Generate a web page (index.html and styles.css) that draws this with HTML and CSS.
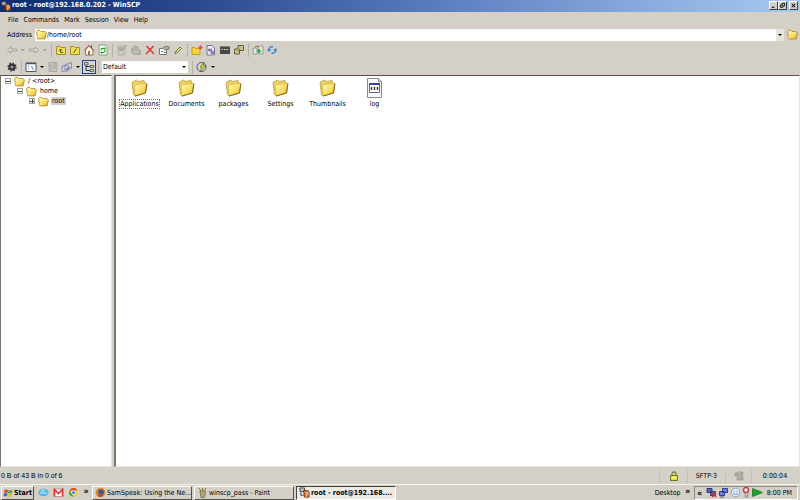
FILE: index.html
```html
<!DOCTYPE html>
<html lang="en">
<head>
<meta charset="utf-8">
<title>root - root@192.168.0.202 - WinSCP</title>
<link rel="stylesheet" href="styles.css">
</head>
<body>
<svg class="defs" aria-hidden="true">
  <defs>
    <linearGradient id="gold" x1="0" y1="0" x2="1" y2="1"><stop offset="0" stop-color="#fffbb0"/><stop offset=".6" stop-color="#f7dd60"/><stop offset="1" stop-color="#dba92c"/></linearGradient>
  </defs>
  <symbol id="folder" viewBox="0 0 20 18"><path d="M1 3.500 2.500 1.500H7L9 3.500H16.500V6H19L16.500 17H3Z" fill="url(#gold)" stroke="#a8801c" stroke-width="1.400"/><path d="M3 16 5.500 6H18.500" fill="none" stroke="#fff6a8"/></symbol>
  <symbol id="bigfolder" viewBox="0 0 17 18"><path d="M1 3.500 5.500 1 7.500 2.500 13 1.500 13.500 4 16 4.500 14.500 14 4 17 2.500 15.500Z" fill="#efd264" stroke="#b59a3c" stroke-width=".8"/><path d="M3.500 6 15.500 4 14.500 14 4 17Z" fill="url(#gold)" stroke="#c5a23c" stroke-width=".5"/><path d="M4 17 14.500 14 15.800 5" fill="none" stroke="#77651f" stroke-width=".9"/></symbol>
  <symbol id="logo" viewBox="0 0 12 12"><path d="M1 1h5v4H1z" fill="#b8c0cc" stroke="#444"/><path d="M2 6v3h3" stroke="#333" fill="none"/><path d="M5 4h5l1 2v5H6z" fill="#d77b35" stroke="#743711"/><path d="M7 6h3v2H8v3" stroke="#ffc287" fill="none"/></symbol>
  <symbol id="larrow" viewBox="0 0 12 12"><path d="M1.500 6 5 3v2h5.500v2H5v2Z" fill="#ddd" stroke="#9a9891" stroke-width=".8"/></symbol>
  <symbol id="lock" viewBox="0 0 10 10"><path d="M3 5V3q0-2 2-2t2 2v2" fill="none" stroke="#82802a" stroke-width="1.300"/><path d="M1.500 4.500h7v5h-7z" fill="#e5e12f" stroke="#77751c"/><path d="M3 6.500h4" stroke="#fffbb0"/></symbol>
</svg>

<header class="title">
  <svg class="i10"><use href="#logo"/></svg>
  <h1>root - root@192.168.0.202 - WinSCP</h1>
  <div class="winbtns">
    <button aria-label="Minimize"><svg viewBox="0 0 8 7"><path d="M2 5.500h3" stroke="#000" stroke-width="1.200"/></svg></button>
    <button aria-label="Restore"><svg viewBox="0 0 8 7"><path d="M3.500 2.500v-1.500h3v3H5M1.500 3h3v2.500h-3z" fill="none" stroke="#000"/></svg></button>
    <button aria-label="Close" class="close"><svg viewBox="0 0 8 7"><path d="M2 1.500 6 5.500M6 1.500 2 5.500" stroke="#000" stroke-width="1.200"/></svg></button>
  </div>
</header>

<nav class="menu">
  <button>File</button><button>Commands</button><button>Mark</button><button>Session</button><button>View</button><button>Help</button>
</nav>

<div class="address">
  <label for="addr">Address</label>
  <div class="field">
    <svg class="i11"><use href="#folder"/></svg>
    <input id="addr" type="text" value="/home/root">
    <button class="drop" aria-label="Show locations"><i class="caret"></i></button>
  </div>
  <button class="tb" aria-label="Open directory"><svg class="i11"><use href="#folder"/></svg></button>
</div>

<div class="toolbar">
  <button class="tb" aria-label="Back"><svg class="i12"><use href="#larrow"/></svg></button>
  <button class="cb" aria-label="Back history"><i class="caret off"></i></button>
  <button class="tb fwd" aria-label="Forward"><svg class="i12 flip"><use href="#larrow"/></svg></button>
  <button class="cb" aria-label="Forward history"><i class="caret off"></i></button>
  <span class="sep"></span>
  <button class="tb" aria-label="Parent directory"><svg class="i12" viewBox="0 0 12 12"><path d="M1.500 2.500h3.500l1 1h4.500v7h-9z" fill="#f4df4e" stroke="#a48d2e"/><path d="M4 6.500 5.500 5 7 6.500M5.500 5v3.500H8" fill="none" stroke="#5a511c"/></svg></button>
  <button class="tb" aria-label="Root directory"><svg class="i12" viewBox="0 0 12 12"><path d="M1.500 2.500h3.500l1 1h4.500v7h-9z" fill="#f4df4e" stroke="#a48d2e"/><path d="M7.500 4.500 4.500 9" stroke="#5a511c"/></svg></button>
  <button class="tb" aria-label="Home directory"><svg class="i12" viewBox="0 0 12 12"><path d="M2.500 6v5h7.500V6L6 2Z" fill="#fff8e4" stroke="#6c5c48" stroke-width=".8"/><path d="M1 6.500 6 1.500 11 6.500M8.500 1v3" fill="none" stroke="#a9452d"/><path d="M5 7h2v4H5z" fill="#a07038"/></svg></button>
  <button class="tb" aria-label="Refresh"><svg class="i12" viewBox="0 0 12 12"><path d="M2 1h6l2 2v8H2z" fill="#f4fff0" stroke="#8d998a"/><path d="M4 6q0-2 3-1.500M8 6q0 3-3 2.500" fill="none" stroke="#2a9c32" stroke-width="1.200"/><path d="M7 3v3l2-1.500zM5 7v3L3 8.500z" fill="#2a9c32"/></svg></button>
  <span class="sep"></span>
  <button class="tb" aria-label="Edit"><svg class="i12" viewBox="0 0 12 12"><path d="M2 2h7v9H2z" fill="#ccc9c1" stroke="#b3b0a9"/><path d="M3 4h4M3 6h3M10.500 1 6 7" stroke="#8d8a83"/></svg></button>
  <button class="tb" aria-label="Copy"><svg class="i12" viewBox="0 0 12 12"><path d="M1.500 5 5 1.500 8 3v3h2.500v4.500H4L1.500 8.500Z" fill="#b5b2aa" stroke="#a09d96" stroke-width=".8"/><path d="M4 7h5M4 9h5" stroke="#cfccc5" stroke-width=".7"/></svg></button>
  <button class="tb" aria-label="Delete"><svg class="i12" viewBox="0 0 12 12"><path d="M2.500 2 10 10M9.500 2 2 10" stroke="#d93838" stroke-width="1.500"/></svg></button>
  <button class="tb" aria-label="Properties"><svg class="i12" viewBox="0 0 12 12"><path d="M1.500 4.500h7v6h-7z" fill="#fff" stroke="#777"/><path d="M5 4q2-3 6-1v2L6 6" fill="#b9b39d" stroke="#77726a"/><path d="M3 7.500h2M6 8.500h2" stroke="#3970a0"/></svg></button>
  <button class="tb" aria-label="Rename"><svg class="i12" viewBox="0 0 12 12"><path d="M3 9.500 4 7 8 3 9.500 4.500 5.500 8.500Z" fill="#dde46a" stroke="#555827" stroke-width=".8"/></svg></button>
  <span class="sep"></span>
  <button class="tb" aria-label="New folder"><svg class="i12" viewBox="0 0 12 12"><path d="M1 3.500h3l1 1h4v6H1z" fill="#f5d438" stroke="#b28d22" stroke-width=".8"/><path d="M9.500 1v5M7 3.500h5M8 2l3 3M11 2 8 5" stroke="#e94b30" stroke-width=".8"/></svg></button>
  <button class="tb" aria-label="Select files"><svg class="i12" viewBox="0 0 12 12"><path d="M2 1.500h5L9.500 4v7H2z" fill="#eee8ff" stroke="#7c7492"/><path d="M3.500 5h3v2h-3zM6 7.500h3v2H6z" fill="#a184c9" stroke="#6d5b86" stroke-width=".6"/></svg></button>
  <button class="tb" aria-label="Open terminal"><svg class="i12" viewBox="0 0 12 12"><path d="M1 2h10v8H1z" fill="#484846"/><path d="M1 2.500h10" stroke="#85858a"/><path d="M2.500 5.500h1.500M5 5.500h1.500M7.500 5.500H9" stroke="#ddd"/></svg></button>
  <button class="tb" aria-label="Synchronize"><svg class="i12" viewBox="0 0 12 12"><path d="M5 1.500h5.500v5H5zM1.500 5h5v5h-5z" fill="#c7c7a5" stroke="#5e5f48"/><path d="M3 8 8 3" stroke="#c4b33c" stroke-width="1.500"/></svg></button>
  <span class="sep"></span>
  <button class="tb" aria-label="Compare directories"><svg class="i12" viewBox="0 0 12 12"><path d="M1 4h4v6H1zM6.500 2H11v8H6.500z" fill="#dbe8dc" stroke="#829181" stroke-width=".8"/><path d="M3 3q2-2 4 0" fill="none" stroke="#ca5148"/><path d="M5 7h4M7 5v4" stroke="#28a45c" stroke-width="1.500"/></svg></button>
  <button class="tb" aria-label="Reload"><svg class="i12" viewBox="0 0 12 12"><path d="M3 6V4.500q1.500-2.500 4-1.500M9.500 6v1.500q-1.500 2.500-4 1.500" fill="none" stroke="#3683cf" stroke-width="1.400"/><path d="M1 5.500h4.500L3 8zM7 6.500h4.500L9.500 4z" fill="#3683cf"/></svg></button>
</div>

<div class="toolbar second">
  <button class="tb" aria-label="Preferences"><svg class="i12" viewBox="0 0 12 12"><circle cx="6" cy="6" r="2.600" fill="#999" stroke="#303030" stroke-width="2"/><circle cx="6" cy="6" r="4" fill="none" stroke="#303030" stroke-width="1.200" stroke-dasharray="1.600 1.540"/></svg></button>
  <span class="sep"></span>
  <button class="tb" aria-label="View style"><svg class="i12" viewBox="0 0 12 12"><path d="M1 2h10v8.500H1z" fill="#fff" stroke="#505666"/><path d="M1 2.500h10" stroke="#505666" stroke-width="1.500"/><path d="M3 5h1M3 8h1M6 6h2M7 8h2" stroke="#367db0"/></svg></button>
  <button class="cb" aria-label="View options"><i class="caret"></i></button>
  <button class="tb" aria-label="Queue"><svg class="i12" viewBox="0 0 12 12"><path d="M2 1.500h8v9H2z" fill="#c8c5bd" stroke="#aba8a1"/><path d="M4 3v6M6 3h3M6 5h3M6 7h3" stroke="#a5a29a"/></svg></button>
  <button class="tb" aria-label="Queue options"><svg class="i12" viewBox="0 0 12 12"><path d="M4 3.500 10.500 1.500v6L4 9zM1 5l6-1v6l-6 .5z" fill="#c9cfdf" stroke="#7b8298" stroke-width=".8"/><path d="M5 9 9 6" stroke="#52689c"/></svg></button>
  <button class="cb" aria-label="More queue options"><i class="caret"></i></button>
  <button class="tb pressed" aria-label="Tree" aria-pressed="true"><svg class="i12" viewBox="0 0 12 12"><path d="M3 4v5.500h4M3 5.500h4" fill="none" stroke="#333"/><path d="M1.500 1.500h3.500v2.500H1.500zM7 4.500h3.500v2H7zM7 8.500h3.500v2H7z" fill="#e5dc77" stroke="#494a48" stroke-width=".8"/></svg></button>
  <span class="sep"></span>
  <div class="combo">
    <select aria-label="Transfer settings"><option>Default</option></select>
    <i class="caret"></i>
  </div>
  <span class="sep wide"></span>
  <button class="tb" aria-label="Transfer settings presets"><svg class="i12" viewBox="0 0 12 12"><circle cx="5.500" cy="6" r="4.500" fill="#d2d8dc" stroke="#50555b"/><path d="M8 1 4 6h2L4 11 9.500 5H7z" fill="#efe12a" stroke="#57551b" stroke-width=".6"/></svg></button>
  <button class="cb" aria-label="Presets"><i class="caret"></i></button>
</div>

<main>
  <aside>
    <ul class="tree">
      <li><div class="row"><button class="exp" aria-label="Collapse /"></button><svg class="i11"><use href="#folder"/></svg><span>/ &lt;root&gt;</span></div>
        <ul>
          <li><div class="row"><button class="exp" aria-label="Collapse home"></button><svg class="i11"><use href="#folder"/></svg><span>home</span></div>
            <ul>
              <li><div class="row"><button class="exp plus" aria-label="Expand root"></button><svg class="i11"><use href="#folder"/></svg><span class="sel">root</span></div></li>
            </ul>
          </li>
        </ul>
      </li>
    </ul>
  </aside>
  <section class="files">
    <div class="file focus"><svg><use href="#bigfolder"/></svg><span>Applications</span></div>
    <div class="file"><svg><use href="#bigfolder"/></svg><span>Documents</span></div>
    <div class="file"><svg><use href="#bigfolder"/></svg><span>packages</span></div>
    <div class="file"><svg><use href="#bigfolder"/></svg><span>Settings</span></div>
    <div class="file"><svg><use href="#bigfolder"/></svg><span>Thumbnails</span></div>
    <div class="file"><svg viewBox="0 0 17 20"><path d="M1.500.5h11l3 3v16h-14z" fill="#fafafa" stroke="#8b8b86"/><path d="M12.500.5v3h3" fill="#ddd" stroke="#8b8b86"/><path d="M3.500 5.500h10v9h-10z" fill="#fff" stroke="#60647c"/><path d="M3 6h11" stroke="#36469a" stroke-width="2"/><path d="M5.500 9v3M8.500 9v3M11.500 9v3" stroke="#333c5c" stroke-width="1.500"/></svg><span>log</span></div>
  </section>
</main>

<footer class="status">
  <span class="grow">0 B of 43 B in 0 of 6</span>
  <span class="cell lockcell"><svg class="i10"><use href="#lock"/></svg></span>
  <span class="cell proto">SFTP-3</span>
  <span class="cell zip"><svg class="i10" viewBox="0 0 10 10"><path d="M1 2h3V1h5v3H8v2h1v3H3V7h1V5H1z" fill="#aaa79f" stroke="#9f9c94" stroke-width=".8"/><path d="M5.500 1v8" stroke="#cfccc5" stroke-dasharray="1 1"/></svg></span>
  <span class="cell time">0:00:04</span>
</footer>

<div class="taskbar">
  <button class="start"><svg class="i10" viewBox="0 0 10 10"><path d="M1.500 2q2-1 3.500 0L4.500 5Q3 4 1 5z" fill="#e14a2b"/><path d="M5.500 2q2 1 4 0L9 5Q7 6 5 5z" fill="#5aa833"/><path d="M1 5.500q2-1 3.500 0L4 8.500q-2-1-3.500 0z" fill="#3868c8"/><path d="M5 5.500q2 1 4 0L8.500 8.500q-2 1-4 0z" fill="#f0bf29"/></svg>Start</button>
  <div class="quick">
    <a href="#" aria-label="Internet Explorer"><svg class="i11" viewBox="0 0 11 11"><ellipse cx="5.500" cy="5.500" rx="5" ry="3.800" fill="#48b4e8"/><path d="M2 6h7M3 4q2-2 4 0" fill="none" stroke="#def5ff"/></svg></a>
    <a href="#" aria-label="Mail"><svg class="i11" viewBox="0 0 11 11"><path d="M1 2h9v7.500H1z" fill="#fff" stroke="#c99"/><path d="M1.500 9.500v-7l4 4 4-4v7" fill="none" stroke="#d73535" stroke-width="1.600"/></svg></a>
    <a href="#" aria-label="Chrome"><svg class="i11" viewBox="0 0 11 11"><circle cx="5.500" cy="5.500" r="4.500" fill="#f1cf38"/><path d="M1.500 3.500a4.500 4.500 0 0 1 8 0H5.500z" fill="#d8402f"/><path d="M1.500 3.500 4 7l1.500 3A4.500 4.500 0 0 1 1.500 3.500" fill="#43a047"/><circle cx="5.500" cy="5.500" r="2" fill="#4b86d5" stroke="#fff" stroke-width=".7"/></svg></a>
  </div>
  <button class="more" aria-label="More shortcuts">»</button>
  <button class="task"><svg class="i11" viewBox="0 0 11 11"><circle cx="5.500" cy="5.500" r="4.800" fill="#e3882b"/><circle cx="6" cy="5" r="2.800" fill="#3d5795"/><path d="M1 3q0 6 5 5l3-2q-1 4-4 4T1 3" fill="#b64d17"/></svg><span>SamSpeak: Using the Ne...</span></button>
  <button class="task"><svg class="i11" viewBox="0 0 11 11"><path d="M3 4h5.500l-1 6.500H4z" fill="#b9ab72" stroke="#706745" stroke-width=".8"/><path d="M4 4 2 1M5.500 4V1M7 4l2-3" stroke="#8c7346"/></svg><span>winscp_pass - Paint</span></button>
  <button class="task active"><svg class="i11"><use href="#logo"/></svg><span>root - root@192.168....</span></button>
  <span class="desk">Desktop</span>
  <button class="more" aria-label="Desktop items">»</button>
  <div class="tray">
    <button class="more" aria-label="Show hidden icons">«</button>
    <svg class="i11" viewBox="0 0 11 11"><path d="M1 1.500h5v4H1zM4.500 4.500h5v4h-5z" fill="#5369be" stroke="#303c75"/><path d="M6 6l4 4M10 6l-4 4" stroke="#d92a2a" stroke-width="1.500"/></svg>
    <svg class="i11" viewBox="0 0 11 11"><path d="M4.500 1.500h5v4h-5zM1.500 4.500h5v4h-5z" fill="#6a88dd" stroke="#303c85"/><path d="M2 10h4" stroke="#555"/></svg>
    <svg class="i11" viewBox="0 0 11 11"><circle cx="5.500" cy="5.500" r="4.300" fill="#e5edff" stroke="#8ca1cf"/><path d="M3.500 4.500h1M6.500 4.500h1M3 6.500q2.500 2 5 0" fill="none" stroke="#6b82b8"/></svg>
    <svg class="i8" viewBox="0 0 8 11"><circle cx="4" cy="3" r="2.500" fill="#fff" stroke="#c83b46" stroke-width="1.500"/><path d="M3 6v4h3V6" fill="#bbb" stroke="#888" stroke-width=".7"/></svg>
    <svg class="i11 play" viewBox="0 0 11 11"><path d="M.5 1.500 10.500 5.500.5 9.500z" fill="#1ba629" stroke="#116b1a" stroke-width=".7"/></svg>
    <time>8:00 PM</time>
  </div>
</div>
</body>
</html>
```
FILE: styles.css
```css
* { box-sizing: border-box; }
html, body { height: 100%; }
body {
  margin: 0;
  display: flex;
  flex-direction: column;
  overflow: hidden;
  background: #d4d0c8;
  color: #000;
  font: 7px/10px "DejaVu Sans Condensed", "DejaVu Sans", sans-serif;
}
.defs { position: absolute; width: 0; height: 0; }
svg { display: block; flex: none; }
button, input, select { font: inherit; color: inherit; margin: 0; padding: 0; border: 0; background: none; border-radius: 0; }
a { color: inherit; }
.i8 { width: 8px; height: 11px; }
.i10 { width: 10px; height: 10px; }
.i11 { width: 11px; height: 11px; }
.i12 { width: 12px; height: 12px; }
.flip { transform: scaleX(-1); }

.title {
  display: flex;
  align-items: center;
  height: 12px;
  flex: none;
  padding: 0 2px 1px 1px;
  background: linear-gradient(90deg, #0f2c71, #2a4a92 25%, #5275b8 50%, #84a6dc 78%, #a6caf0);
  color: #fff;
}
.title h1 { margin: 0; flex: 1; padding-left: 1px; font-size: 7px; line-height: 11px; }
.winbtns { display: flex; }
.winbtns button { width: 9px; height: 9px; background: #d4d0c8; border: 1px solid; border-color: #fff #404040 #404040 #fff; }
.winbtns svg { width: 7px; height: 7px; }
.winbtns .close { margin-left: 2px; }

.menu { display: flex; gap: 5px; align-items: center; height: 16px; flex: none; padding-left: 8px; }

.address { display: flex; align-items: center; height: 13px; flex: none; padding-left: 7px; }
.address label { width: 28px; }
.field { flex: 1; display: flex; align-items: center; height: 12px; padding-left: 1px; background: #fff; }
.field input { flex: 1; min-width: 0; height: 12px; outline: 0; }
.drop { width: 8px; height: 12px; background: #e6e3dd; display: grid; place-items: center; }
.address .tb { width: 16px; }

.caret { display: block; width: 0; height: 0; border: 2px solid transparent; border-top-color: #000; border-bottom: 0; }
.caret.off { border-top-color: #9a968e; }

.toolbar { display: flex; align-items: center; height: 18px; flex: none; padding-left: 5px; }
.toolbar.second { height: 16px; }
.tb { width: 14px; height: 14px; display: grid; place-items: center; flex: none; }
.cb { width: 8px; height: 12px; display: grid; place-items: center; flex: none; }
.sep { width: 1px; height: 13px; margin: 0 2px; background: #b5b1a9; flex: none; }
.sep.wide { margin: 0 2px 0 4px; }
.pressed { border: 1px solid #2b3c72; background: #d3d7e1; }
.combo { position: relative; width: 86px; height: 12px; margin-left: 1px; background: #fff; }
.combo select { appearance: none; width: 100%; height: 12px; padding-left: 1px; }
.combo .caret { position: absolute; right: 2px; top: 5px; pointer-events: none; }

main { flex: 1; min-height: 0; display: flex; gap: 2px; }
aside, .files { background: #fff; border: 1px solid; border-color: #55534f #e6e3dd #e6e3dd #77746d; }
aside { width: 14%; }
.files {
  flex: 1;
  border-left-width: 2px;
  border-left-color: #77746d;
  display: grid;
  grid-template-columns: repeat(auto-fill, 47px);
  align-content: start;
  padding-top: 2px;
}
.tree, .tree ul { margin: 0; padding: 0; list-style: none; }
.tree { padding: 0 0 0 4px; }
.tree ul { padding-left: 12px; }
.row { display: flex; align-items: center; height: 10px; gap: 3px; }
.row span { margin-left: -1px; padding: 0 1px; line-height: 8px; }
.exp { width: 6px; height: 6px; border: 1px solid #a0a09c; background: linear-gradient(#444, #444) center / 4px 1px no-repeat #fff; }
.exp.plus { background: linear-gradient(#444, #444) center / 4px 1px no-repeat, linear-gradient(#444, #444) center / 1px 4px no-repeat #fff; }
.sel { background: #d4d0c8; }
.file { display: flex; flex-direction: column; align-items: center; }
.file svg { width: 17px; height: 20px; }
.file span { border: 1px dotted transparent; line-height: 8px; margin-top: 1px; white-space: nowrap; }
.file.focus span { border-color: #777; }

.status { display: flex; align-items: center; height: 17px; flex: none; padding: 1px 2px 0 1px; font-family: "Liberation Sans", Arial, sans-serif; }
.grow { flex: 1; }
.cell { height: 13px; display: flex; align-items: center; justify-content: center; border-right: 1px solid #c2beb6; }
.lockcell { width: 29px; border-left: 1px solid #c2beb6; }
.proto { width: 38px; font-family: "DejaVu Sans Condensed", sans-serif; }
.zip { width: 26px; }
.time { width: 46px; font-family: "DejaVu Sans Condensed", sans-serif; border: 0; }

.taskbar { display: flex; align-items: center; height: 16px; flex: none; padding: 0 2px 0 1px; border-top: 1px solid #f5f3ee; }
.start, .task { display: flex; align-items: center; height: 14px; border: 1px solid; border-color: #fff #55534f #55534f #fff; }
.start { width: 33px; font-weight: bold; gap: 1px; padding-left: 1px; }
.quick { display: flex; gap: 4px; padding-left: 4px; }
.more { width: 10px; font-size: 9px; font-weight: bold; line-height: 10px; }
.taskbar > .more { margin: 0 1px 3px 2px; }
.task { width: 100px; gap: 1px; padding-left: 2px; margin-right: 2px; overflow: hidden; white-space: nowrap; }
.task.active { border-color: #44423e #fff #fff #44423e; background: #edeae5; font-weight: bold; }
.desk { margin-left: auto; }
.tray { display: flex; align-items: center; height: 14px; padding-right: 5px; border: 1px solid; border-color: #8e8a82 #fff #fff #8e8a82; gap: 1px; }
.play { margin: 0 3px 0 1px; }
```
